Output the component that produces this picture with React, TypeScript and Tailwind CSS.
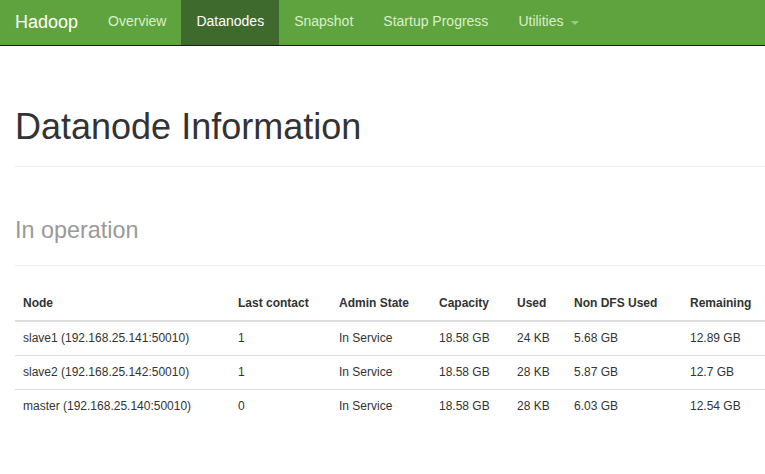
import React from "react";

const rows = [
  ["slave1 (192.168.25.141:50010)", "1", "In Service", "18.58 GB", "24 KB", "5.68 GB", "12.89 GB"],
  ["slave2 (192.168.25.142:50010)", "1", "In Service", "18.58 GB", "28 KB", "5.87 GB", "12.7 GB"],
  ["master (192.168.25.140:50010)", "0", "In Service", "18.58 GB", "28 KB", "6.03 GB", "12.54 GB"],
];

const heads = ["Node", "Last contact", "Admin State", "Capacity", "Used", "Non DFS Used", "Remaining"];
const widths = ["w-[215px]", "w-[101px]", "w-[100px]", "w-[78px]", "w-[57px]", "w-[116px]", "w-[118px]"];

export default function App() {
  return (
    <div className="w-screen h-screen overflow-hidden bg-white text-[#333] font-['Liberation_Sans',Arial,sans-serif]">
      <nav className="h-[46px] bg-[#5fa33e] border-b border-[#1b1b1b] flex items-stretch pl-[15px] text-[14px]">
        <div className="flex items-center pb-[1px] text-[18px] text-white pr-[15px]">Hadoop</div>
        <div className="flex items-stretch">
          <a className="flex items-center pb-[2px] px-[15px] text-[#d9f0cc]">Overview</a>
          <a className="flex items-center pb-[2px] px-[15px] bg-[#3f6a2d] text-white">Datanodes</a>
          <a className="flex items-center pb-[2px] px-[15px] text-[#d9f0cc]">Snapshot</a>
          <a className="flex items-center pb-[2px] px-[15px] text-[#d9f0cc]">Startup Progress</a>
          <a className="flex items-center pb-[2px] px-[15px] text-[#d9f0cc]">
            Utilities
            <span className="ml-[7px] mt-[2px] inline-block w-0 h-0 border-l-[4px] border-r-[4px] border-t-[4px] border-l-transparent border-r-transparent border-t-[#9cc98a]" />
          </a>
        </div>
      </nav>
      <div className="w-[860px] px-[15px]">
        <div className="mt-[61px] pb-[9px] border-b border-[#eee]">
          <h1 className="text-[36px] leading-[39.6px] mb-[10px] text-[#333]">Datanode Information</h1>
        </div>
        <div className="mt-[39px] pb-[9px] border-b border-[#eee]">
          <h1 className="text-[36px] leading-[39.6px] mb-[6px]">
            <span className="text-[23.4px] text-[#999]">In operation</span>
          </h1>
        </div>
        <table className="mt-[21px] border-collapse text-[12px] leading-[17px] text-[#333]">
          <thead>
            <tr className="border-b-2 border-[#ddd]">
              {heads.map((h, i) => (
                <th key={h} className={`${widths[i]} text-left font-bold px-[8px] py-[8px]`}>{h}</th>
              ))}
            </tr>
          </thead>
          <tbody>
            {rows.map((r, ri) => (
              <tr key={ri} className={ri > 0 ? "border-t border-[#ddd]" : ""}>
                {r.map((c, ci) => (
                  <td key={ci} className={`${widths[ci]} px-[8px] py-[8px]`}>{c}</td>
                ))}
              </tr>
            ))}
          </tbody>
        </table>
      </div>
    </div>
  );
}
